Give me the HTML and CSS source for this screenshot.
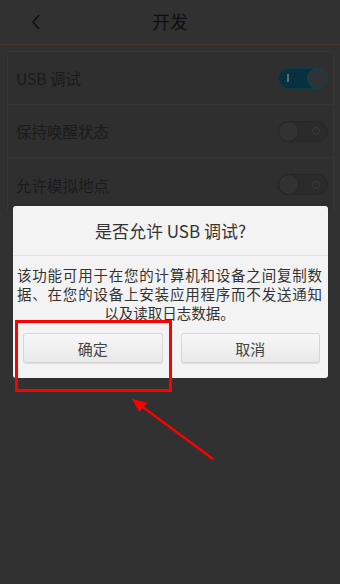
FILE: index.html
```html
<!DOCTYPE html>
<html lang="zh-CN">
<head>
<meta charset="utf-8">
<link rel="stylesheet" href="styles.css">
</head>
<body>
<div class="screen">
  <header class="topbar">
    <svg class="back" width="10" height="16" viewBox="0 0 10 16"><path d="M8 1 L2 8 L8 15" fill="none" stroke="#0e0e0e" stroke-width="1.4"/></svg>
    <div class="title">开发</div>
  </header>
  <div class="card">
    <div class="row">
      <span class="label">USB 调试</span>
      <span class="switch on"><span class="bar"></span><span class="knob"></span></span>
    </div>
    <div class="row">
      <span class="label">保持唤醒状态</span>
      <span class="switch off"><span class="knob"></span><span class="ring"></span></span>
    </div>
    <div class="row last">
      <span class="label">允许模拟地点</span>
      <span class="switch off"><span class="knob"></span><span class="ring"></span></span>
    </div>
  </div>

  <div class="dialog">
    <div class="dlg-title">是否允许 USB 调试?</div>
    <div class="dlg-body">
      <div class="jl">该功能可用于在您的计算机和设备之间复制数</div>
      <div class="jl">据、在您的设备上安装应用程序而不发送通知</div>
      <div class="cl">以及读取日志数据。</div>
    </div>
    <div class="dlg-buttons">
      <button class="btn">确定</button>
      <button class="btn">取消</button>
    </div>
  </div>

  <div class="highlight"></div>
  <svg class="arrow" width="340" height="584" viewBox="0 0 340 584">
    <line x1="213" y1="459" x2="140" y2="405" stroke="#f00" stroke-width="2.2"/>
    <path d="M132 399 L148 403 L143 406.5 L139.5 412 Z" fill="#f00"/>
  </svg>
</div>
</body>
</html>
```

FILE: styles.css
```css
* { box-sizing: border-box; }
html, body { margin: 0; padding: 0; }
body {
  background: #313131;
  font-family: "Noto Sans CJK SC", "Noto Sans", sans-serif;
}
.screen {
  position: relative;
  width: 340px;
  height: 584px;
  overflow: hidden;
  background: #313131;
}
.topbar {
  height: 45px;
  border-bottom: 1px solid #47322a;
  display: flex;
  align-items: center;
  justify-content: center;
  position: relative;
}
.back {
  position: absolute;
  left: 31px;
  top: 14px;
}
.title {
  font-size: 18px;
  color: #0f0f0f;
  line-height: 1;
  margin-top: -2px;
}
.card {
  margin: 6px 6px 0 7px;
  border: 1px solid #363636;
  border-bottom: none;
  border-radius: 4px 4px 0 0;
  background: #2f2f2f;
}
.row {
  height: 53px;
  display: flex;
  align-items: center;
  justify-content: space-between;
  padding: 0 5px 0 8px;
  border-bottom: 1px solid #353535;
}
.row.last { border-bottom: none; }
.label {
  font-size: 15.5px;
  color: #1b1b1b;
}
.switch {
  width: 50px;
  height: 21px;
  border-radius: 11px;
  display: flex;
  align-items: center;
  position: relative;
}
.switch.on {
  background: #08303e;
  border: 1px solid #0c3c4c;
  justify-content: space-between;
  padding: 0 0 0 8px;
}
.switch.on .bar {
  width: 2px;
  height: 8px;
  background: #5c6c72;
}
.switch.on .knob {
  width: 21px;
  height: 21px;
  border-radius: 50%;
  background: #2f3335;
  border: 1px solid #0e4457;
  margin-right: -1px;
}
.switch.off {
  background: #2b2b2b;
  border: 1px solid #272727;
  justify-content: space-between;
  padding: 0 7px 0 0;
}
.switch.off .knob {
  width: 21px;
  height: 21px;
  border-radius: 50%;
  background: #323232;
  border: 1px solid #262626;
  margin-left: -1px;
}
.switch.off .ring {
  width: 8px;
  height: 8px;
  border-radius: 50%;
  border: 1.5px solid #3a3a3a;
}
.dialog {
  position: absolute;
  left: 13px;
  top: 206px;
  width: 315px;
  height: 172px;
  background: #f3f3f3;
  border-radius: 3px;
  display: flex;
  flex-direction: column;
}
.dlg-title {
  height: 50px;
  border-bottom: 1px solid #e3e3e3;
  display: flex;
  align-items: center;
  justify-content: center;
  font-size: 17px;
  color: #333;
  padding-bottom: 1px;
}
.dlg-body {
  padding: 9px 6px 0 4px;
  font-size: 14.5px;
  line-height: 19px;
  color: #333;
}
.jl {
  text-align: justify;
  text-align-last: justify;
}
.cl {
  text-align: center;
}
.dlg-buttons {
  display: grid;
  grid-template-columns: 1fr 1fr;
  gap: 18px;
  padding: 0 8px 0 10px;
  margin-top: 11px;
}
.btn {
  height: 30px;
  border: 1px solid #d6d6d6;
  border-radius: 3px;
  background: linear-gradient(#f7f7f7, #e9e9e9);
  font-family: inherit;
  font-size: 15px;
  color: #444;
  padding: 0;
  box-shadow: 0 1px 0 #dcdcdc;
}
.highlight {
  position: absolute;
  left: 15px;
  top: 320px;
  width: 157px;
  height: 72px;
  border: 3px solid #f00;
}
.arrow {
  position: absolute;
  left: 0;
  top: 0;
  pointer-events: none;
}
```
